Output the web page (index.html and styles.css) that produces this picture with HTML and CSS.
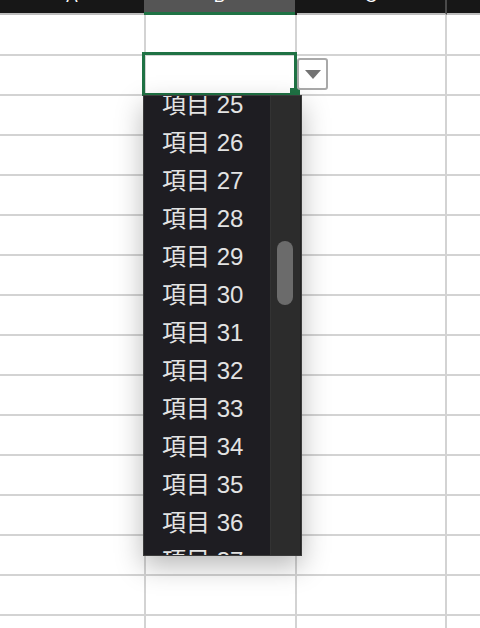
FILE: index.html
```html
<!DOCTYPE html>
<html lang="ja">
<head>
<meta charset="utf-8">
<title>Sheet</title>
<link rel="stylesheet" href="styles.css">
</head>
<body>
<div class="sheet">
  <div class="row head">
    <div class="cell hc"><span class="hl">A</span></div>
    <div class="cell hc active"><span class="hl">B</span></div>
    <div class="cell hc"><span class="hl">C</span></div>
    <div class="cell hc last"></div>
  </div>
  <div class="row first"><div class="cell"></div><div class="cell"></div><div class="cell"></div><div class="cell last"></div></div>
  <div class="row"><div class="cell"></div><div class="cell"></div><div class="cell"></div><div class="cell last"></div></div>
  <div class="row"><div class="cell"></div><div class="cell"></div><div class="cell"></div><div class="cell last"></div></div>
  <div class="row"><div class="cell"></div><div class="cell"></div><div class="cell"></div><div class="cell last"></div></div>
  <div class="row"><div class="cell"></div><div class="cell"></div><div class="cell"></div><div class="cell last"></div></div>
  <div class="row"><div class="cell"></div><div class="cell"></div><div class="cell"></div><div class="cell last"></div></div>
  <div class="row"><div class="cell"></div><div class="cell"></div><div class="cell"></div><div class="cell last"></div></div>
  <div class="row"><div class="cell"></div><div class="cell"></div><div class="cell"></div><div class="cell last"></div></div>
  <div class="row"><div class="cell"></div><div class="cell"></div><div class="cell"></div><div class="cell last"></div></div>
  <div class="row"><div class="cell"></div><div class="cell"></div><div class="cell"></div><div class="cell last"></div></div>
  <div class="row"><div class="cell"></div><div class="cell"></div><div class="cell"></div><div class="cell last"></div></div>
  <div class="row"><div class="cell"></div><div class="cell"></div><div class="cell"></div><div class="cell last"></div></div>
  <div class="row"><div class="cell"></div><div class="cell"></div><div class="cell"></div><div class="cell last"></div></div>
  <div class="row"><div class="cell"></div><div class="cell"></div><div class="cell"></div><div class="cell last"></div></div>
  <div class="row"><div class="cell"></div><div class="cell"></div><div class="cell"></div><div class="cell last"></div></div>
  <div class="row"><div class="cell"></div><div class="cell"></div><div class="cell"></div><div class="cell last"></div></div>

  <div class="selection"></div>
  <div class="fill-handle"></div>
  <div class="dd-button"><span class="tri"></span></div>

  <div class="popup">
    <div class="list">
      <div class="items">
        <div class="item">項目 25</div>
        <div class="item">項目 26</div>
        <div class="item">項目 27</div>
        <div class="item">項目 28</div>
        <div class="item">項目 29</div>
        <div class="item">項目 30</div>
        <div class="item">項目 31</div>
        <div class="item">項目 32</div>
        <div class="item">項目 33</div>
        <div class="item">項目 34</div>
        <div class="item">項目 35</div>
        <div class="item">項目 36</div>
        <div class="item">項目 37</div>
      </div>
    </div>
    <div class="track"><div class="thumb"></div></div>
  </div>
</div>
</body>
</html>
```

FILE: styles.css
```css
* { box-sizing: border-box; }
html, body { margin: 0; padding: 0; background: #ffffff; }
body {
  width: 480px;
  height: 628px;
  overflow: hidden;
  font-family: "Liberation Sans", "Noto Sans CJK JP", sans-serif;
}
.sheet {
  position: relative;
  width: 480px;
  height: 628px;
  overflow: hidden;
}
.row {
  display: grid;
  grid-template-columns: 146px 151px 150px 1fr;
  height: 40px;
  border-bottom: 2px solid #d3d3d3;
}
.row.first { height: 41px; }
.cell {
  border-right: 2px solid #d3d3d3;
  height: 100%;
}
.cell.last { border-right: none; }

.row.head {
  height: 15px;
  border-bottom: none;
  background: #171717;
}
.hc {
  border-right: 2px solid #4a4a4a;
  border-bottom: 2px solid #bdbdbd;
  display: flex;
  justify-content: center;
  overflow: hidden;
  color: #ffffff;
}
.hc:first-child { border-right: none; width: 144px; }
.hc.active {
  background: #555555;
  border-bottom: 3px solid #1f7244;
  border-right: none;
  margin-left: -2px;
  width: 151px;
}
.hl {
  display: block;
  font-size: 17px;
  line-height: 16px;
  margin-top: -11px;
}

.selection {
  position: absolute;
  left: 142px;
  top: 52px;
  width: 155px;
  height: 44px;
  border: 3px solid #1f7244;
}
.fill-handle {
  position: absolute;
  left: 290px;
  top: 88px;
  width: 10px;
  height: 9px;
  background: #1f7244;
}
.dd-button {
  position: absolute;
  left: 297px;
  top: 58px;
  width: 31px;
  height: 32px;
  background: #ffffff;
  border: 2px solid #a9a9a9;
  border-radius: 3px;
  display: flex;
  align-items: center;
  justify-content: center;
}
.tri {
  display: block;
  width: 0;
  height: 0;
  border-left: 8px solid transparent;
  border-right: 8px solid transparent;
  border-top: 9px solid #737373;
  margin-top: 1px;
}

.popup {
  position: absolute;
  left: 143px;
  top: 95px;
  width: 159px;
  height: 461px;
  border: 1px solid #3b3b3b;
  display: flex;
  box-shadow: 0 10px 26px rgba(0, 0, 0, 0.28);
}
.list {
  flex: 1;
  background: #1e1d22;
  overflow: hidden;
}
.items { margin-top: -10px; }
.item {
  height: 38px;
  line-height: 38px;
  padding-left: 18px;
  font-size: 24px;
  color: #e3e3e3;
  white-space: nowrap;
}
.track {
  width: 31px;
  background: #2c2c2c;
  border-left: 1px solid #333333;
  border-right: 1px solid #222222;
  padding-top: 145px;
  padding-left: 6px;
}
.thumb {
  width: 16px;
  height: 64px;
  background: #6b6b6b;
  border-radius: 8px;
}
```
